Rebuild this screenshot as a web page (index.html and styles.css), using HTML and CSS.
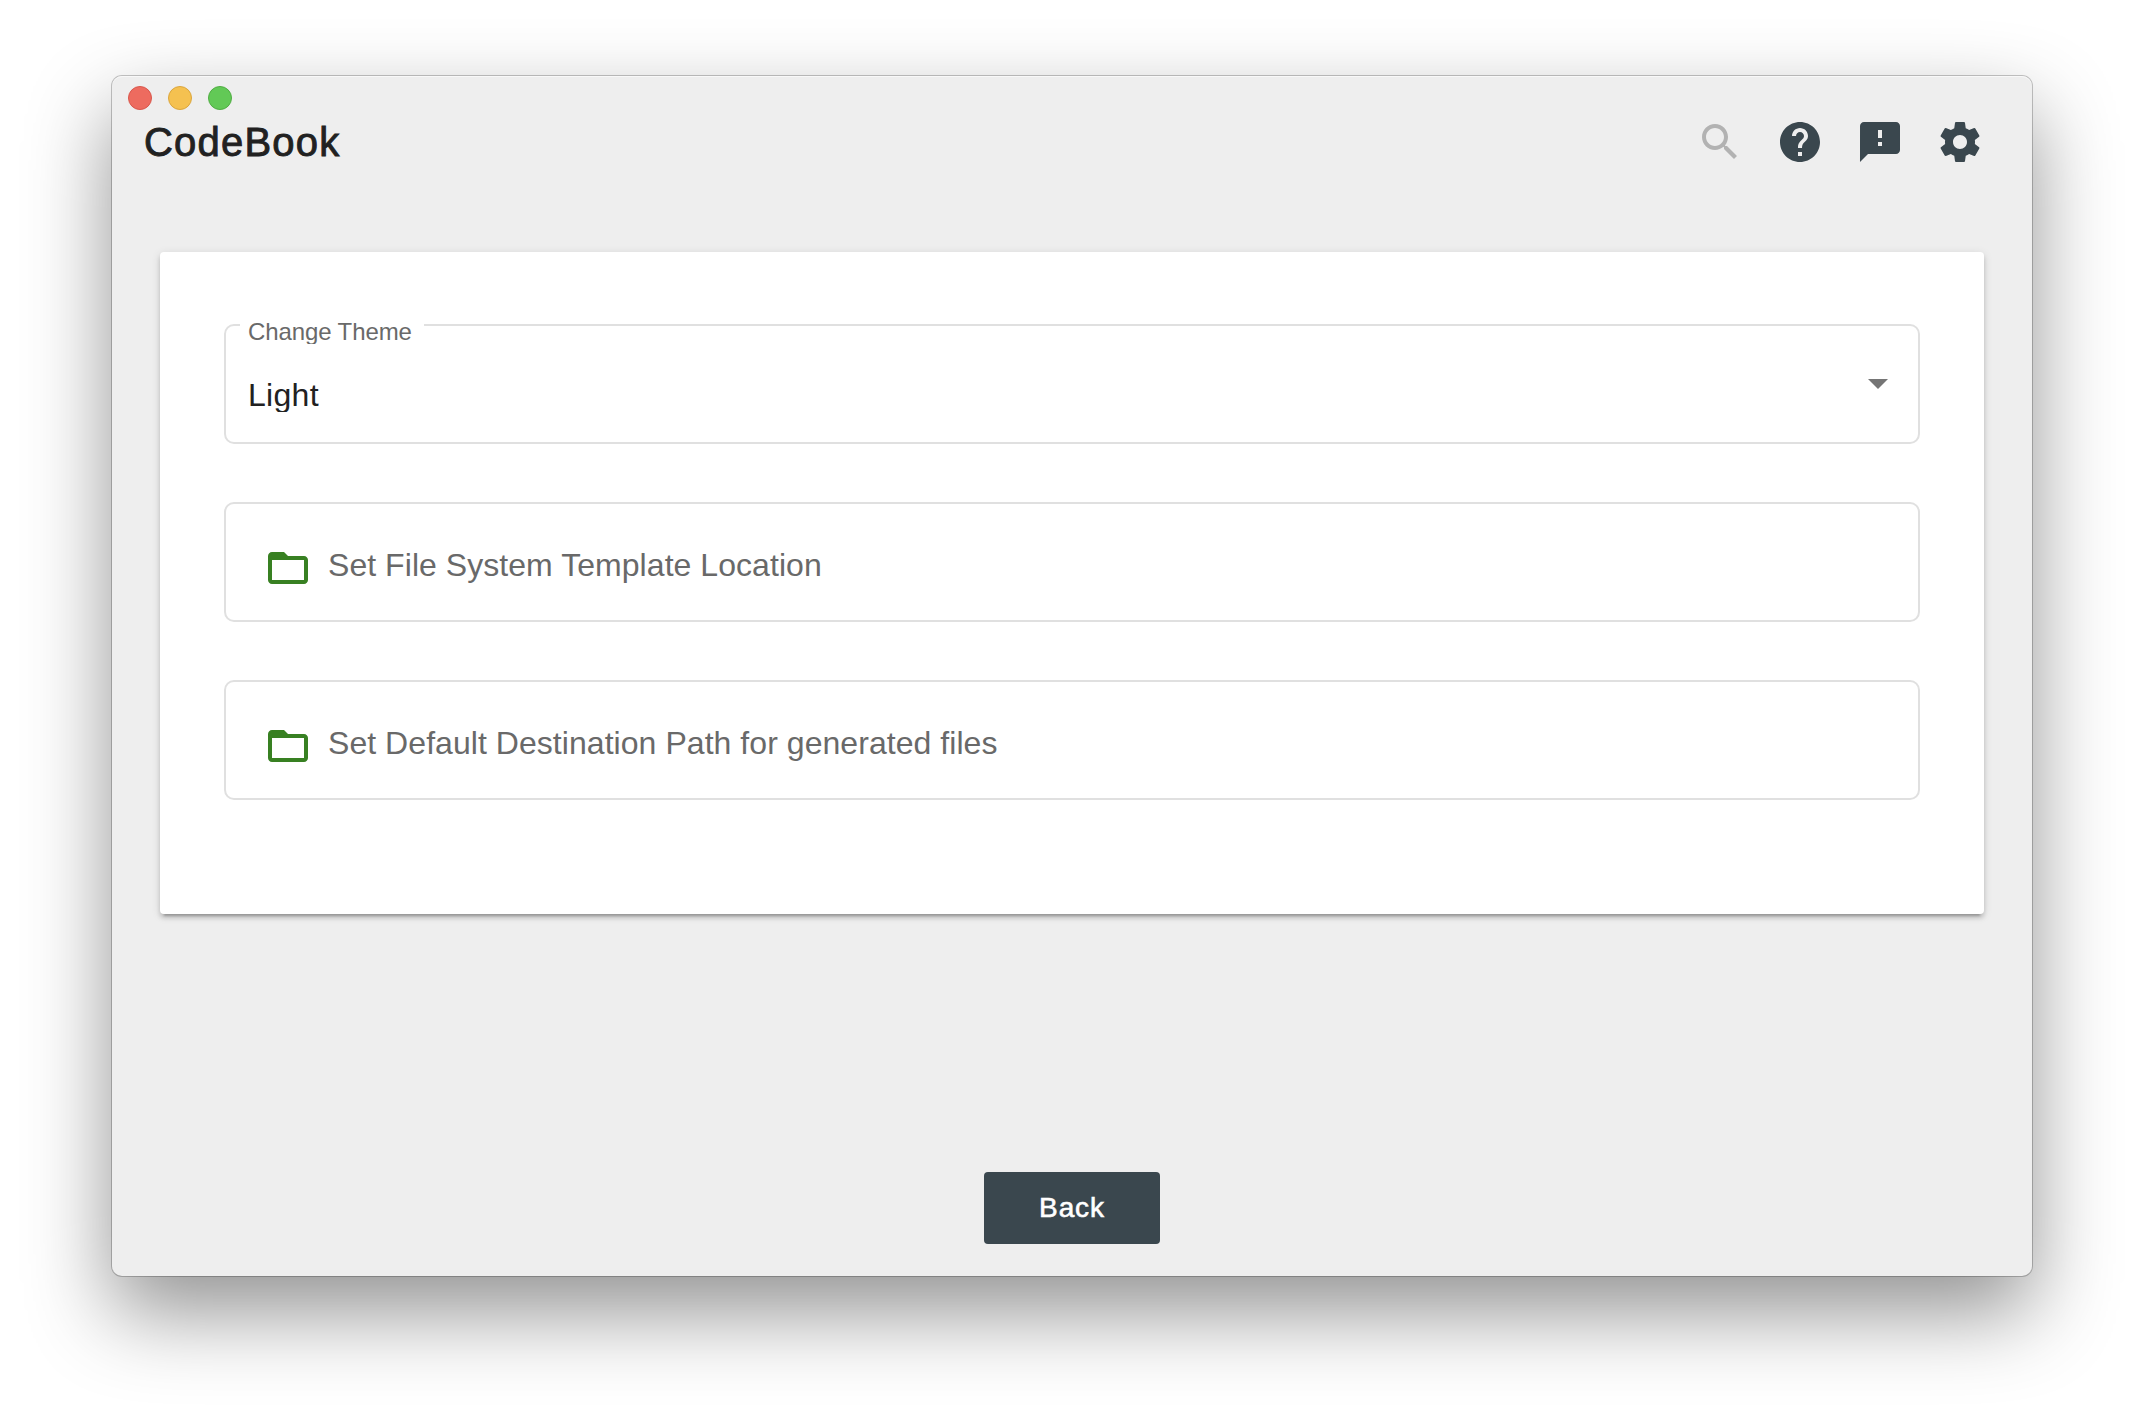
FILE: index.html
```html
<!DOCTYPE html>
<html lang="en">
<head>
<meta charset="utf-8">
<title>CodeBook</title>
<link rel="stylesheet" href="styles.css">
</head>
<body>
<div class="window">
  <div class="titlebar">
    <span class="light close"></span>
    <span class="light minimize"></span>
    <span class="light maximize"></span>
  </div>
  <header class="toolbar">
    <h1 class="brand">CodeBook</h1>
    <nav class="actions">
      <svg class="icon muted" viewBox="0 0 24 24"><path d="M15.5 14h-.79l-.28-.27C15.41 12.59 16 11.11 16 9.5 16 5.91 13.09 3 9.5 3S3 5.91 3 9.5 5.91 16 9.5 16c1.61 0 3.09-.59 4.23-1.57l.27.28v.79l5 4.99L20.49 19l-4.99-5zm-6 0C7.01 14 5 11.99 5 9.5S7.01 5 9.5 5 14 7.01 14 9.5 11.99 14 9.5 14z"/></svg>
      <svg class="icon" viewBox="0 0 24 24"><path d="M12 2C6.48 2 2 6.48 2 12s4.48 10 10 10 10-4.48 10-10S17.52 2 12 2zm1 17h-2v-2h2v2zm2.07-7.75l-.9.92C13.45 12.9 13 13.5 13 15h-2v-.5c0-1.1.45-2.1 1.17-2.83l1.24-1.26c.37-.36.59-.86.59-1.41 0-1.1-.9-2-2-2s-2 .9-2 2H8c0-2.21 1.79-4 4-4s4 1.79 4 4c0 .88-.36 1.68-.93 2.25z"/></svg>
      <svg class="icon" viewBox="0 0 24 24"><path d="M20 2H4c-1.1 0-1.99.9-1.99 2L2 22l4-4h14c1.1 0 2-.9 2-2V4c0-1.1-.9-2-2-2zm-7 12h-2v-2h2v2zm0-4h-2V6h2v4z"/></svg>
      <svg class="icon" viewBox="0 0 24 24"><path d="M19.43 12.98c.04-.32.07-.64.07-.98s-.03-.66-.07-.98l2.11-1.65c.19-.15.24-.42.12-.64l-2-3.46c-.12-.22-.39-.3-.61-.22l-2.49 1c-.52-.4-1.08-.73-1.69-.98l-.38-2.65C14.46 2.18 14.25 2 14 2h-4c-.25 0-.46.18-.49.42l-.38 2.65c-.61.25-1.17.59-1.69.98l-2.49-1c-.23-.09-.49 0-.61.22l-2 3.46c-.13.22-.07.49.12.64l2.11 1.65c-.04.32-.07.65-.07.98s.03.66.07.98l-2.11 1.65c-.19.15-.24.42-.12.64l2 3.46c.12.22.39.3.61.22l2.49-1c.52.4 1.08.73 1.69.98l.38 2.65c.03.24.24.42.49.42h4c.25 0 .46-.18.49-.42l.38-2.65c.61-.25 1.17-.59 1.69-.98l2.49 1c.23.09.49 0 .61-.22l2-3.46c.12-.22.07-.49-.12-.64l-2.11-1.65zM12 15.5c-1.93 0-3.5-1.57-3.5-3.5s1.57-3.5 3.5-3.5 3.5 1.57 3.5 3.5-1.57 3.5-3.5 3.5z"/></svg>
    </nav>
  </header>
  <main class="card">
    <div class="field select">
      <span class="label">Change Theme</span>
      <span class="value">Light</span>
      <span class="arrow"></span>
    </div>
    <div class="field">
      <svg class="icon folder" viewBox="0 0 24 24"><path d="M20 6h-8l-2-2H4c-1.1 0-1.99.9-1.99 2L2 18c0 1.1.9 2 2 2h16c1.1 0 2-.9 2-2V8c0-1.1-.9-2-2-2zm0 12H4V8h16v10z"/></svg>
      <span class="path">Set File System Template Location</span>
    </div>
    <div class="field">
      <svg class="icon folder" viewBox="0 0 24 24"><path d="M20 6h-8l-2-2H4c-1.1 0-1.99.9-1.99 2L2 18c0 1.1.9 2 2 2h16c1.1 0 2-.9 2-2V8c0-1.1-.9-2-2-2zm0 12H4V8h16v10z"/></svg>
      <span class="path">Set Default Destination Path for generated files</span>
    </div>
  </main>
  <footer class="footer">
    <button class="back">Back</button>
  </footer>
</div>
</body>
</html>
```
FILE: styles.css
```css
* {
  box-sizing: border-box;
}

body {
  margin: 0;
  height: 1424px;
  padding: 76px 112px 0;
  overflow: hidden;
  background: #fff;
  font-family: "Liberation Sans", Arial, sans-serif;
  color: #212121;
}

.window {
  display: flex;
  flex-direction: column;
  width: 1920px;
  height: 1200px;
  padding: 10px 48px 32px;
  border-radius: 10px;
  background: #eee;
  box-shadow:
    inset 0 1px 0 #f8f8f8,
    0 0 0 1px rgba(0, 0, 0, .22),
    0 36px 84px rgba(0, 0, 0, .43);
}

.titlebar {
  display: flex;
  gap: 16px;
  height: 32px;
  margin-left: -32px;
}

.light {
  width: 24px;
  height: 24px;
  border: 1px solid;
  border-radius: 50%;
}

.close {
  background: #ed6b5f;
  border-color: #d9574c;
}

.minimize {
  background: #f5c150;
  border-color: #dba63e;
}

.maximize {
  background: #62c956;
  border-color: #50ad43;
}

.toolbar {
  display: flex;
  justify-content: space-between;
  height: 134px;
  margin-left: -16px;
}

.brand {
  margin: 0;
  font-size: 40px;
  font-weight: 400;
  line-height: 48px;
  letter-spacing: 1.2px;
  -webkit-text-stroke: .9px #212121;
}

.actions {
  display: flex;
  gap: 32px;
}

.icon {
  flex: none;
  width: 48px;
  height: 48px;
  fill: #3a474e;
}

.muted {
  fill: #b2b2b2;
}

.folder {
  fill: #388022;
}

.card {
  display: flex;
  flex-direction: column;
  gap: 58px;
  height: 662px;
  padding: 72px 64px;
  border-radius: 4px;
  background: #fff;
  box-shadow:
    0 6px 2px -4px rgba(0, 0, 0, .2),
    0 4px 4px rgba(0, 0, 0, .14),
    0 2px 10px rgba(0, 0, 0, .12);
}

.field {
  position: relative;
  display: flex;
  height: 120px;
  padding: 40px 30px 0 38px;
  border: 2px solid #e0e0e0;
  border-radius: 10px;
}

.select {
  justify-content: space-between;
  padding: 49px 30px 0 22px;
}

/* Floating label that interrupts the outline */
.label {
  position: absolute;
  left: 14px;
  top: -8px;
  width: 184px;
  height: 26px;
  padding-left: 8px;
  overflow: hidden;
  background: #fff;
  color: #696969;
  font-size: 24px;
  line-height: 28px;
  letter-spacing: -.1px;
  white-space: nowrap;
}

.value {
  height: 37px;
  overflow: hidden;
  font-size: 32px;
  line-height: 40px;
  letter-spacing: .3px;
}

.arrow {
  height: 10px;
  margin-top: 4px;
  border: 10px solid transparent;
  border-top-color: #757575;
  border-bottom: 0;
}

.path {
  margin-top: 1px;
  padding-left: 16px;
  color: #696969;
  font-size: 32px;
  line-height: 40px;
  letter-spacing: .05px;
}

.footer {
  display: flex;
  flex: 1;
  align-items: flex-end;
  justify-content: center;
}

.back {
  width: 176px;
  height: 72px;
  padding: 0;
  border: 0;
  border-radius: 4px;
  background: #3a474e;
  color: #fff;
  font-family: inherit;
  font-size: 28px;
  line-height: 72px;
  letter-spacing: .9px;
  -webkit-text-stroke: .6px #fff;
}
```
